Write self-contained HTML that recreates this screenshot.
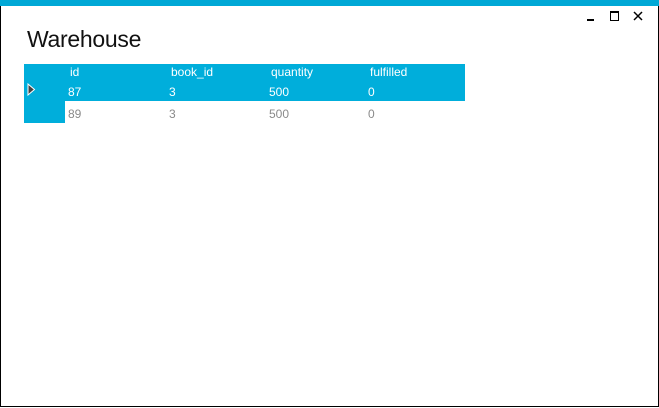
<!DOCTYPE html>
<html><head><style>
body{margin:0;width:659px;height:408px;overflow:hidden;background:#fff;font-family:"Segoe UI","Liberation Sans",sans-serif;}
.frame{position:absolute;left:0;top:0;width:657px;height:406px;border:1px solid #000;border-top:none;}
.bar{position:absolute;left:0;top:0;width:659px;height:6px;background:#00a8d6;}
.t{position:absolute;font-size:12px;}
h1{position:absolute;left:27px;top:26px;margin:0;font-weight:200;font-size:23px;color:#111;letter-spacing:-0.3px;}
</style></head><body>
<div class="frame"></div>
<div class="bar"></div>
<div style="position:absolute;left:587px;top:19px;width:7px;height:2px;background:#000"></div>
<div style="position:absolute;left:610px;top:11px;width:7px;height:7px;border:1px solid #000;border-top-width:2px"></div>
<svg style="position:absolute;left:633px;top:11px" width="10" height="10"><path d="M1 1L9 9M9 1L1 9" stroke="#000" stroke-width="1.5"/></svg>
<h1>Warehouse</h1>
<div style="position:absolute;left:24px;top:64px;width:441px;height:37px;background:#00aedb"></div>
<div style="position:absolute;left:24px;top:101px;width:41px;height:22px;background:#00aedb"></div>
<svg style="position:absolute;left:27px;top:83px" width="9" height="13"><path d="M1 1L7.5 6.5L1 12Z" fill="#444" stroke="#fff" stroke-width="1"/></svg>
<div class="t" style="left:70px;top:65px;color:#fff">id</div>
<div class="t" style="left:171px;top:65px;color:#fff">book_id</div>
<div class="t" style="left:271px;top:65px;color:#fff">quantity</div>
<div class="t" style="left:370px;top:65px;color:#fff">fulfilled</div>
<div class="t" style="left:68px;top:85px;color:#fff">87</div>
<div class="t" style="left:169px;top:85px;color:#fff">3</div>
<div class="t" style="left:269px;top:85px;color:#fff">500</div>
<div class="t" style="left:368px;top:85px;color:#fff">0</div>
<div class="t" style="left:68px;top:107px;color:#8a8a8a">89</div>
<div class="t" style="left:169px;top:107px;color:#8a8a8a">3</div>
<div class="t" style="left:269px;top:107px;color:#8a8a8a">500</div>
<div class="t" style="left:368px;top:107px;color:#8a8a8a">0</div>
</body></html>
